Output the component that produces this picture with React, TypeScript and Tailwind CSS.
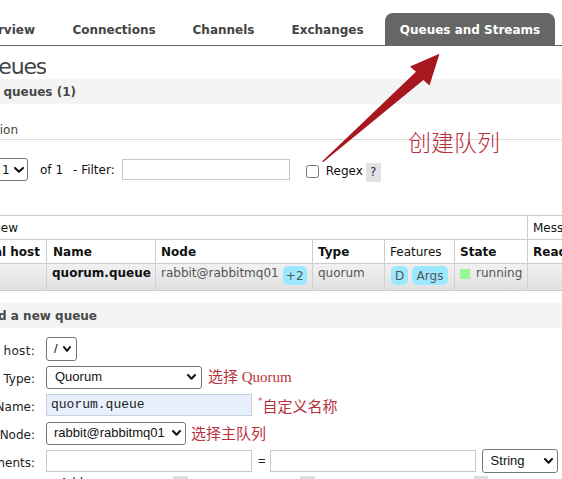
import React from 'react';

const RED = 'text-[#b8303c]';
const NOTE_FONT = "font-['Liberation_Serif','Noto_Sans_CJK_SC',serif]";

const Chevron: React.FC<{ w?: number }> = ({ w = 9 }) => (
  <svg width={w} height="6" viewBox={`0 0 ${w} 6`} className="shrink-0">
    <path d={`M1 1 L${w / 2} 4.8 L${w - 1} 1`} fill="none" stroke="#111" strokeWidth="2" strokeLinecap="round" strokeLinejoin="round" />
  </svg>
);

const FakeSelect: React.FC<{ className: string; children: React.ReactNode; chevron?: number }> = ({ className, children, chevron }) => (
  <div className={`flex shrink-0 items-center justify-between rounded-[3px] border border-[#767676] bg-white text-[#111] ${className}`}>
    <span className="whitespace-nowrap">{children}</span>
    <Chevron w={chevron} />
  </div>
);

// label that is cut off on the left edge of the picture
const Label: React.FC<{ text: string; className?: string }> = ({ text, className = '' }) => (
  <div className={`mt-[4px] flex w-[35px] shrink-0 justify-end overflow-hidden whitespace-nowrap text-[#222] ${className}`}>
    <span className="shrink-0">{text}</span>
  </div>
);

const Badge: React.FC<{ children: React.ReactNode; className?: string }> = ({ children, className = '' }) => (
  <span className={`flex h-[19px] shrink-0 items-center justify-center rounded-[5px] bg-[#9ce9ff] text-[#555] ${className}`}>{children}</span>
);

const tabs = [
  { name: 'Connections', w: 'w-[114px]' },
  { name: 'Channels', w: 'w-[93px]' },
  { name: 'Exchanges', w: 'w-[103px]' },
];

export default function App() {
  return (
    <div className="relative h-[479px] w-[562px] overflow-hidden bg-white font-['DejaVu_Sans',sans-serif] text-[12px] leading-[14px]">
      {/* menu tabs */}
      <div className="flex h-[46px] items-end gap-[6px] border-b border-[#666] font-bold">
        <div className="flex h-[32px] w-[51px] shrink-0 items-center justify-end overflow-hidden whitespace-nowrap pr-[16px] pt-[1px] text-[#444]">
          <span className="shrink-0">Overview</span>
        </div>
        {tabs.map(t => (
          <div key={t.name} className={`flex h-[32px] shrink-0 items-center justify-center whitespace-nowrap pt-[1px] text-[#444] ${t.w}`}>
            {t.name}
          </div>
        ))}
        <div className="flex h-[32px] w-[170px] shrink-0 items-center justify-center whitespace-nowrap rounded-t-[8px] bg-[#666] pt-[1px] text-white">
          Queues and Streams
        </div>
      </div>

      <div className="h-[33px] pt-[8px]">
        <div className="flex w-[46px] justify-end overflow-hidden whitespace-nowrap text-[22px] leading-[26px] tracking-[-1.2px] text-[#444]">
          <span className="shrink-0">Queues</span>
        </div>
      </div>

      <div className="flex h-[25px] items-center bg-[#f4f4f4]">
        <div className="flex w-[76px] justify-end overflow-hidden whitespace-nowrap font-bold text-[#484848]">
          <span className="shrink-0">All queues (1)</span>
        </div>
      </div>

      <div className="h-[36px] border-b border-[#ddd] pt-[19px]">
        <div className="flex w-[18px] justify-end overflow-hidden whitespace-nowrap text-[#444]">
          <span className="shrink-0">Pagination</span>
        </div>
      </div>

      {/* pagination / filter row */}
      <div className="h-[75px] pt-[18px]">
        <div className="flex h-[23px] items-center text-[#111]">
          <FakeSelect className="-ml-[6px] h-[23px] w-[34px] pl-[7px] pr-[3px]" chevron={10}>1</FakeSelect>
          <span className="ml-[12px] whitespace-nowrap">of 1</span>
          <span className="ml-[10px] whitespace-nowrap">- Filter:</span>
          <div className="ml-[7px] h-[21px] w-[168px] shrink-0 border border-[#c8c8c8]" />
          <div className="ml-[16px] mt-[3px] h-[13px] w-[13px] shrink-0 rounded-[2.5px] border border-[#767676]" />
          <span className="ml-[7px] mt-[3px]">Regex</span>
          <span className="ml-[3px] mt-[5px] flex h-[19px] w-[15px] items-center justify-center bg-[#e2e2e2] text-[#1a2a50]">?</span>
        </div>
      </div>

      {/* queue table */}
      <div className="text-[#111]">
        <div className="flex h-[24px] border-t border-[#ccc]">
          <div className="flex w-[528px] shrink-0 items-center border-r border-[#ccc]">
            <div className="flex w-[18px] justify-end overflow-hidden whitespace-nowrap">
              <span className="shrink-0">Overview</span>
            </div>
          </div>
          <div className="flex items-center whitespace-nowrap pl-[5px]">Messages</div>
        </div>

        <div className="flex h-[24px] border-t border-[#ccc] font-bold">
          <div className="flex w-[47px] shrink-0 items-center justify-end overflow-hidden whitespace-nowrap border-r border-[#ccc] pr-[6px]">
            <span className="shrink-0">Virtual host</span>
          </div>
          <div className="flex w-[109px] shrink-0 items-center border-r border-[#ccc] pl-[6px]">Name</div>
          <div className="flex w-[157px] shrink-0 items-center border-r border-[#ccc] pl-[5px]">Node</div>
          <div className="flex w-[72px] shrink-0 items-center border-r border-[#ccc] pl-[5px]">Type</div>
          <div className="flex w-[70px] shrink-0 items-center border-r border-[#ccc] pl-[5px] font-normal">Features</div>
          <div className="flex w-[73px] shrink-0 items-center border-r border-[#ccc] pl-[5px]">State</div>
          <div className="flex items-center whitespace-nowrap pl-[5px]">Ready</div>
        </div>

        <div className="flex h-[28px] border-y border-[#ccc] bg-linear-to-b from-[#f1f1f1] to-[#e1e1e1] text-[#555]">
          <div className="w-[47px] shrink-0 border-r border-[#d2d2d2]" />
          <div className="flex w-[109px] shrink-0 items-start whitespace-nowrap border-r border-[#d2d2d2] pl-[5px] pt-[2px] font-bold text-[#111]">quorum.queue</div>
          <div className="flex w-[157px] shrink-0 items-start whitespace-nowrap border-r border-[#d2d2d2] pl-[5px] pt-[2px]">
            <span>rabbit@rabbitmq01</span>
            <Badge className="ml-[4px] w-[24px]">+2</Badge>
          </div>
          <div className="flex w-[72px] shrink-0 items-start border-r border-[#d2d2d2] pl-[5px] pt-[2px]">quorum</div>
          <div className="flex w-[70px] shrink-0 items-start gap-[4px] border-r border-[#d2d2d2] pl-[6px] pt-[2px]">
            <Badge className="w-[17px]">D</Badge>
            <Badge className="w-[36px]">Args</Badge>
          </div>
          <div className="flex w-[73px] shrink-0 items-start border-r border-[#d2d2d2] pl-[5px] pt-[2px]">
            <span className="mt-[3px] h-[10px] w-[10px] shrink-0 bg-[#98f898]" />
            <span className="ml-[6px]">running</span>
          </div>
          <div />
        </div>
      </div>

      <div className="mt-[12px] flex h-[25px] items-center bg-[#f4f4f4]">
        <div className="flex w-[97px] justify-end overflow-hidden whitespace-nowrap font-bold text-[#484848]">
          <span className="shrink-0">Add a new queue</span>
        </div>
      </div>

      {/* add queue form */}
      <div className="pt-[7px]">
        <div className="flex h-[28px] items-center">
          <Label text="Virtual host:" className="tracking-[0.3px]" />
          <FakeSelect className="ml-[11px] h-[24px] w-[31px] pl-[7px] pr-[5px] font-['Liberation_Sans',sans-serif] text-[13px]" chevron={8}>/</FakeSelect>
        </div>
        <div className="flex h-[28px] items-center">
          <Label text="Type:" />
          <FakeSelect className="ml-[11px] h-[23px] w-[156px] pl-[8px] pr-[5px] font-['Liberation_Sans',sans-serif] text-[13px]">Quorum</FakeSelect>
          <span className={`ml-[6px] whitespace-nowrap text-[15px] leading-[18px] ${NOTE_FONT} ${RED}`}>选择 Quorum</span>
        </div>
        <div className="flex h-[28px] items-center">
          <Label text="Name:" />
          <div className="ml-[11px] flex h-[22px] w-[206px] shrink-0 items-center border border-[#c3cfe0] bg-[#e8f0fe] pl-[4px] font-['Liberation_Mono',monospace] text-[13px] text-[#222]">
            quorum.queue
          </div>
          <span className="mb-[9px] ml-[6px] text-[9px] leading-[10px] text-[#d04a55]">*</span>
          <span className={`mt-[3px] whitespace-nowrap text-[15px] leading-[18px] ${NOTE_FONT} ${RED}`}>自定义名称</span>
        </div>
        <div className="flex h-[28px] items-center">
          <Label text="Node:" />
          <FakeSelect className="ml-[11px] h-[23px] w-[140px] pl-[7px] pr-[4px] font-['Liberation_Sans',sans-serif] text-[13px]">rabbit@rabbitmq01</FakeSelect>
          <span className={`ml-[5px] mt-[2px] whitespace-nowrap text-[15px] leading-[18px] ${NOTE_FONT} ${RED}`}>选择主队列</span>
        </div>
        <div className="flex h-[28px] items-center">
          <Label text="Arguments:" />
          <div className="ml-[11px] h-[22px] w-[206px] shrink-0 border border-[#c8c8c8]" />
          <span className="ml-[6px] font-['Liberation_Sans',sans-serif] text-[13px] text-[#222]">=</span>
          <div className="ml-[4px] h-[22px] w-[206px] shrink-0 border border-[#c8c8c8]" />
          <FakeSelect className="ml-[6px] h-[24px] w-[76px] pl-[8px] pr-[4px] font-['Liberation_Sans',sans-serif] text-[13px]">String</FakeSelect>
        </div>
        <div className="flex h-[20px] items-start leading-[16px] text-[#222]">
          <span className="ml-[60px]">Add</span>
          <span className="ml-[90px] mt-[1px] flex h-[19px] w-[15px] shrink-0 items-center justify-center bg-[#ddd]">?</span>
          <span className="ml-[112px] mt-[1px] flex h-[19px] w-[15px] shrink-0 items-center justify-center bg-[#ddd]">?</span>
          <span className="ml-[159px] mt-[1px] flex h-[19px] w-[14px] shrink-0 items-center justify-center bg-[#ddd]">?</span>
        </div>
      </div>

      {/* annotation overlay */}
      <svg className="pointer-events-none absolute left-0 top-0" width="562" height="479" viewBox="0 0 562 479">
        <polygon
          points="322.3,161.3 416,71.8 410,66.4 439.5,53.8 429.5,85.4 423.4,80 323.1,162.2"
          fill="#a8161f"
        />
      </svg>
      <div className={`pointer-events-none absolute left-[408px] top-[130px] whitespace-nowrap font-['Noto_Sans_CJK_SC',sans-serif] text-[23px] font-light leading-[23px] ${RED}`}>
        创建队列
      </div>
    </div>
  );
}
